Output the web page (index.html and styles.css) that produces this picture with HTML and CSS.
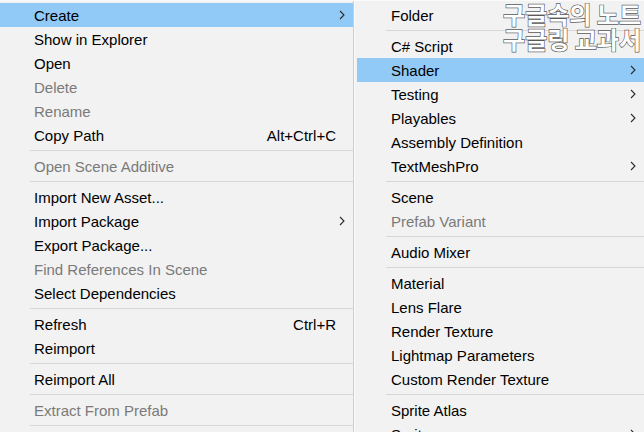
FILE: index.html
```html
<!DOCTYPE html>
<html>
<head>
<meta charset="utf-8">
<link rel="stylesheet" href="styles.css">
</head>
<body>
<div class="wrap">
  <div class="menu left">
    <div class="item hl"><span class="label">Create</span><svg class="arrow" width="6" height="10" viewBox="0 0 6 10"><path d="M1 1 L5 5 L1 9" fill="none" stroke="#2b2b2b" stroke-width="1.1"/></svg></div>
    <div class="item"><span class="label">Show in Explorer</span></div>
    <div class="item"><span class="label">Open</span></div>
    <div class="item dis"><span class="label">Delete</span></div>
    <div class="item dis"><span class="label">Rename</span></div>
    <div class="item"><span class="label">Copy Path</span><span class="key">Alt+Ctrl+C</span></div>
    <div class="sep"></div>
    <div class="item dis"><span class="label">Open Scene Additive</span></div>
    <div class="sep"></div>
    <div class="item"><span class="label">Import New Asset...</span></div>
    <div class="item"><span class="label">Import Package</span><svg class="arrow" width="6" height="10" viewBox="0 0 6 10"><path d="M1 1 L5 5 L1 9" fill="none" stroke="#2b2b2b" stroke-width="1.1"/></svg></div>
    <div class="item"><span class="label">Export Package...</span></div>
    <div class="item dis"><span class="label">Find References In Scene</span></div>
    <div class="item"><span class="label">Select Dependencies</span></div>
    <div class="sep"></div>
    <div class="item"><span class="label">Refresh</span><span class="key">Ctrl+R</span></div>
    <div class="item"><span class="label">Reimport</span></div>
    <div class="sep"></div>
    <div class="item"><span class="label">Reimport All</span></div>
    <div class="sep"></div>
    <div class="item dis"><span class="label">Extract From Prefab</span></div>
    <div class="sep"></div>
  </div>
  <div class="menu right">
    <div class="item"><span class="label">Folder</span></div>
    <div class="sep"></div>
    <div class="item"><span class="label">C# Script</span></div>
    <div class="item hl"><span class="label">Shader</span><svg class="arrow" width="6" height="10" viewBox="0 0 6 10"><path d="M1 1 L5 5 L1 9" fill="none" stroke="#2b2b2b" stroke-width="1.1"/></svg></div>
    <div class="item"><span class="label">Testing</span><svg class="arrow" width="6" height="10" viewBox="0 0 6 10"><path d="M1 1 L5 5 L1 9" fill="none" stroke="#2b2b2b" stroke-width="1.1"/></svg></div>
    <div class="item"><span class="label">Playables</span><svg class="arrow" width="6" height="10" viewBox="0 0 6 10"><path d="M1 1 L5 5 L1 9" fill="none" stroke="#2b2b2b" stroke-width="1.1"/></svg></div>
    <div class="item"><span class="label">Assembly Definition</span></div>
    <div class="item"><span class="label">TextMeshPro</span><svg class="arrow" width="6" height="10" viewBox="0 0 6 10"><path d="M1 1 L5 5 L1 9" fill="none" stroke="#2b2b2b" stroke-width="1.1"/></svg></div>
    <div class="sep"></div>
    <div class="item"><span class="label">Scene</span></div>
    <div class="item dis"><span class="label">Prefab Variant</span></div>
    <div class="sep"></div>
    <div class="item"><span class="label">Audio Mixer</span></div>
    <div class="sep"></div>
    <div class="item"><span class="label">Material</span></div>
    <div class="item"><span class="label">Lens Flare</span></div>
    <div class="item"><span class="label">Render Texture</span></div>
    <div class="item"><span class="label">Lightmap Parameters</span></div>
    <div class="item"><span class="label">Custom Render Texture</span></div>
    <div class="sep"></div>
    <div class="item"><span class="label">Sprite Atlas</span></div>
    <div class="item"><span class="label">Sprites</span><svg class="arrow" width="6" height="10" viewBox="0 0 6 10"><path d="M1 1 L5 5 L1 9" fill="none" stroke="#2b2b2b" stroke-width="1.1"/></svg></div>
  </div>
</div>
<div class="watermark">
  <div class="wm-line">구글속의 노트</div>
  <div class="wm-line">구글링 교과서</div>
</div>
</body>
</html>
```

FILE: styles.css
```css
html, body {
  margin: 0;
  padding: 0;
}
body {
  width: 644px;
  height: 432px;
  overflow: hidden;
  background: #f2f2f2;
  font-family: "Liberation Sans", Arial, sans-serif;
  font-size: 15px;
  color: #000;
  position: relative;
}
.wrap {
  display: flex;
  height: 432px;
  border-top: 1px solid #fafafa;
}
.menu {
  padding-top: 2px;
  background: #f2f2f2;
  overflow: hidden;
}
.left {
  width: 353px;
  flex: none;
  border-right: 1px solid #cdcdcd;
}
.right {
  flex: 1;
  padding-left: 2px;
  border-left: 1px solid #fafafa;
}
.item {
  height: 24px;
  display: flex;
  align-items: center;
  padding-left: 34px;
  padding-right: 8px;
  white-space: nowrap;
}
.item .label {
  flex: 1;
}
.item.hl {
  background: #91c9f7;
}
.item.dis {
  color: #7a7a7a;
}
.key {
  margin-right: 9px;
}
.arrow {
  flex: none;
  display: block;
}
.sep {
  height: 7px;
  margin-left: 30px;
  position: relative;
}
.sep::after {
  content: "";
  display: block;
  position: absolute;
  left: 0;
  right: 0;
  top: 3px;
  height: 1px;
  background: #d7d7d7;
}
.right .sep {
  margin-left: 29px;
}
.watermark {
  position: absolute;
  right: 3px;
  top: 1px;
  text-align: right;
  font-family: "Noto Sans CJK KR", sans-serif;
  font-size: 24px;
  font-weight: 700;
  color: #ffffff;
  -webkit-text-stroke: 1.3px #5a5a5a;
  paint-order: stroke fill;
}
.wm-line {
  height: 25px;
  line-height: 25px;
}
```
